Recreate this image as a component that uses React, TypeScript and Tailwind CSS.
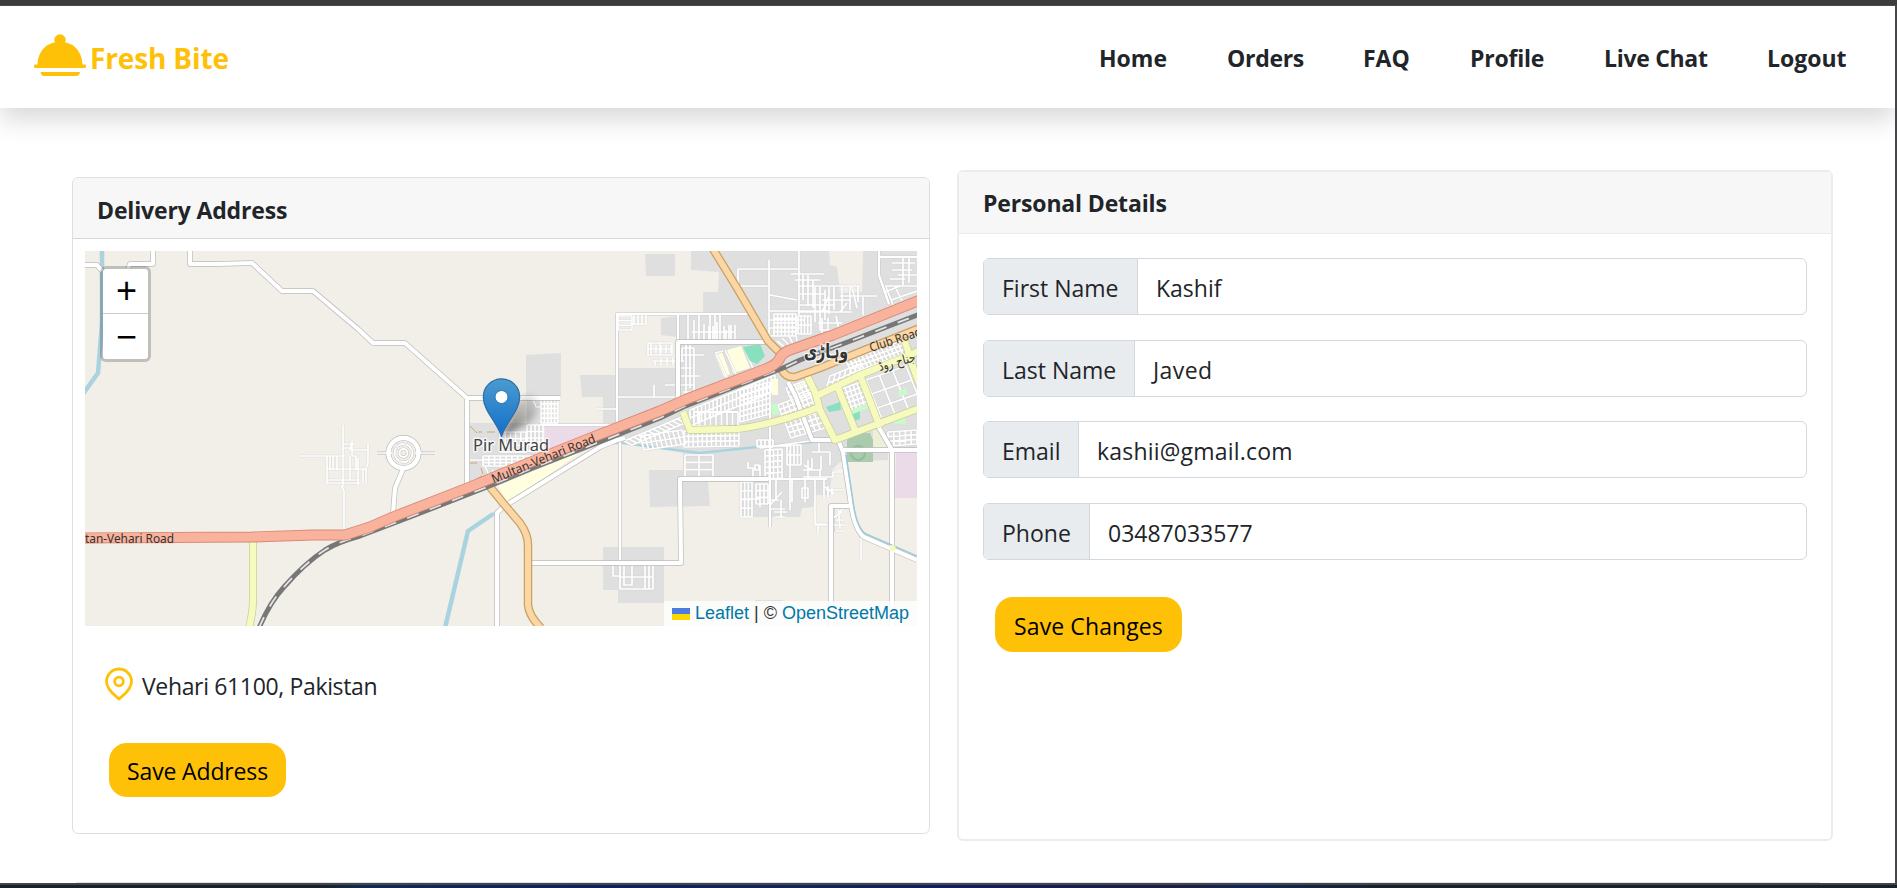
import React from "react";

type Pt = [number, number];

/** Street grid: a parallelogram from `o` spanned by `u` and `v`, cut into nu x nv blocks. */
function grid(o: Pt, u: Pt, v: Pt, nu: number, nv: number): string {
  let d = "";
  for (let i = 0; i <= nu; i++) {
    const x = o[0] + (u[0] * i) / nu;
    const y = o[1] + (u[1] * i) / nu;
    d += `M${x} ${y}l${v[0]} ${v[1]}`;
  }
  for (let j = 0; j <= nv; j++) {
    const x = o[0] + (v[0] * j) / nv;
    const y = o[1] + (v[1] * j) / nv;
    d += `M${x} ${y}l${u[0]} ${u[1]}`;
  }
  return d;
}

const fineStreets = [
  // village west of the roundabout
  "M300 456H345M343 425V487M327 456V483M330 456V470M333 456V470M337 456V470M326 469H366M327 483H360M328 480H358M358 458V485M363 469V482M366 469V482M366 469L368 462V443M352 450H368M352 442L350 450M343 444H354M343 448H352M352 441V456H356V470M350 456V480M344 530V490L341 486",
  // Pir Murad
  grid([541, 399], [17, 0], [0, 24], 5, 5),
  grid([527, 425], [16, 0], [0, 26], 4, 4),
  grid([500, 432], [26, 0], [0, 20], 5, 3),
  grid([483, 456], [52, 0], [0, 10], 9, 3),
  "M533 399L536 407H541M470 460H490M493 470V480M485 466L492 482M541 425H617",
  // village in the south
  grid([620, 565], [33, 0], [0, 24], 1, 2),
  "M613 564V576H620M624 566V585H632V566M645 564V589M649 564V589",
  // north-west blocks
  "M596 409H617M617 397H678M654 385V397",
  grid([618, 316], [14, 0], [0, 14], 1, 3),
  "M634 315V324M638 315V325M642 315V324M646 315V324M630 324H646",
  grid([648, 343], [24, 0], [0, 12], 2, 2),
  "M651 343V354M656 346V353M661 346V353M666 345V353M671 345V353M653 361H684M655 361V366M661 358V365M667 358V365M673 358V365M682 348V362",
  "M688 315V342M694 320V342M699 315V342M704 324V342M710 315V342M715 315V342M720 315V342M724 326V340M729 325V340M735 325V340M692 332H735M682 348H694M686 342V396M690 342V388M694 348V392M680 355H704M680 368H692M665 385H694M681 376H700M683 392H700",
  "M709 326V342M713 326V342M731 325V342M717 322V342M726 330V342",
  "M716 353L727 378M725 350L736 374M745 349L754 371M715 353L723 351",
  // blocks around the junction, north side
  "M738 269H799M738 269V287M738 286H769M769 260V344M799 251V315M791 274H824M795 280H820M798 286H860M770 295L797 300M770 311H830M770 320H805M770 328H800M770 336H790",
  "M803 275V300M808 275V306M813 280V308M798 294H825M800 305H835M798 312H852M815 287V322M820 287V330M825 290V320M829 287V314M822 300H850M834 287V310M842 287V312M850 287V310M858 286V302M829 296L822 312M863 297V315M840 296H877M852 287L857 308M847 303L840 312",
  grid([774, 314], [22, 0], [0, 22], 6, 5),
  grid([798, 316], [13, 0], [0, 18], 4, 2),
  "M818 323H842M822 318V335M828 318V334M836 316L839 330M820 330H840M777 341L787 349M782 338L790 346M788 334L793 344M795 330L797 341",
  "M892 263H915M892 270H912M898 275H917M903 257V285M890 279H905M909 258V283M885 286H917M886 287L893 305M895 286L902 301M885 292L900 286M891 300L917 291",
  // blocks south of the railway
  grid([690, 410], [85, -35], [0, 16], 22, 2),
  grid([624, 441], [58, -24], [8, 4], 12, 1),
  grid([640, 436], [42, -6], [4, 14], 9, 2),
  grid([684, 431], [55, -1], [0, 16], 12, 3),
  grid([740, 390], [30, -8], [0, 32], 8, 6),
  grid([694, 412], [44, 0], [0, 14], 8, 1),
  grid([778, 405], [36, -14], [5, 14], 8, 3),
  grid([786, 388], [26, -10], [6, 14], 6, 3),
  grid([785, 422], [34, -10], [6, 16], 7, 3),
  grid([826, 390], [32, -13], [4, -14], 6, 2),
  grid([846, 361], [55, -20], [6, 12], 14, 3),
  grid([841, 389], [20, -7], [8, 24], 5, 5),
  grid([866, 380], [40, -14], [17, 42], 3, 3),
  grid([888, 432], [29, -2], [0, 14], 5, 3),
  grid([757, 440], [16, 0], [0, 7], 4, 1),
  "M760 448L817 440M757 446H790",
  // blocks along the southern edge
  grid([685, 455], [28, 0], [0, 22], 2, 3),
  grid([765, 450], [17, -1], [0, 29], 4, 5),
  grid([787, 445], [14, 0], [0, 20], 4, 2),
  "M748 462V468H753V478M755 465H759V470H755ZM760 465V480M790 450V510M792 479V502M776 480V500M804 465L812 470M803 470H820V477M808 460V478M812 458V470M818 452H830V465M819 443V452H812M803 477H833V472H843M821 456V470",
  grid([741, 482], [11, 0], [0, 35], 3, 4),
  grid([756, 484], [12, 0], [0, 20], 3, 3),
  "M741 499H760M760 499V507M770 505L782 492M771 500H779M770 509H785M781 500V517M774 512H787M775 517H785M802 488V498H808V488ZM805 479V502M815 479V524H826M815 525H830M818 526V533M824 479V498M825 487L835 494M826 490H844M828 486V497M832 488V495M842 512L833 518M835 520H843M833 525H846M836 531H845M838 505L840 528M846 505L838 514",
  "M861 535V560M837 470H843",
].join("");

const mediumStreets =
  "M617 423V314H750M617 423L620 440V560M678 314V342M541 425H617M770 405V527M768 479H827M879 251V275L889 304M879 257H917M694 412H738M833 506V532";

const whiteRoads = [
  "M85 265H97L102 271",
  "M128 269L130 264H153V251",
  "M190 251V264H218L252 263L282 291H313L358 329L373 343H405L467 398V484",
  "M467 398H560",
  "M497 626V513L503 507L600 447L617 440L625 438",
  "M531 563H681L680 479H768",
  "M403 469L395 488L393 514",
  "M678 398V342H768",
  "M831 626V506H849",
  "M788 382L795 395L812 440H838L843 452L850 498Q854 530 864 537L917 560",
  "M892 626V450L878 426",
  "M843 450H917",
];

const trunk =
  "M80 538L253 537L313 535H345L370 527L393 517L470 487L543 457L593 437L660 411L687 399L768 368Q778 364 781 356Q784 352 790 350L833 335L920 300";
const rail =
  "M259 628Q270 602 284 587Q305 563 325 550Q338 542 360 536L410 517L487 487L533 468L607 439L660 418L683 407L783 368L800 360L853 340L920 314";
const orange = [
  "M713 249L737 288L768 341L782 355",
  "M782 370Q786 378 795 377L820 368L867 349L920 328",
  "M490 487L503 503L520 523Q528 534 528 545V605Q529 616 541 628",
];
const yellow = [
  "M253 540V600Q253 612 249 628",
  "M683 412L690 430L737 429Q775 424 817 408",
  "M807 376L815 392L820 410L835 440L880 423L920 408",
  "M818 395L860 375L910 355L920 350",
  "M838 388L855 430",
  "M860 375L880 427",
  "M904 338L913 367L920 386",
];

function MapDrawing() {
  return (
    <svg viewBox="85 251 832 375" className="block h-full w-full" fill="none" strokeLinejoin="round">
      <defs>
        <linearGradient id="pin" x1="0" y1="0" x2="0" y2="1">
          <stop offset="0" stopColor="#4b9bd0" />
          <stop offset="1" stopColor="#126fc8" />
        </linearGradient>
        <linearGradient id="shade" x1="0" y1="1" x2="1" y2="0">
          <stop offset="0" stopColor="#000" stopOpacity=".55" />
          <stop offset="1" stopColor="#000" stopOpacity=".05" />
        </linearGradient>
        <filter id="soft" x="-30%" y="-30%" width="160%" height="160%">
          <feGaussianBlur stdDeviation="3" />
        </filter>
      </defs>
      <rect x="85" y="251" width="832" height="375" fill="#f2efe9" />

      {/* built-up areas */}
      <g fill="#dfdfdf">
        <path d="M526 355L561 353V397H526ZM580 375H617V368H678V337L661 335V318L703 313V292H718L719 272L691 270V251H917V452H888V460L840 462L832 470L830 495H815L813 507L802 508L800 517H740V482H708L710 506L650 507L649 470H683V453L620 440V423H603V397H582Z" />
        <path d="M645 254H675V276H646ZM603 547H664V603H618V590H603ZM470 423H543V455L470 484ZM527 397H543V425H527ZM755 600H783V604H755Z" />
      </g>
      <path d="M829 251H863L862 292L840 293L837 267L830 265Z" fill="#f2efe9" />
      <g fill="#ffffe0">
        <path d="M715 355L722 352L730 374L724 377ZM727 350L741 346L750 368L733 373ZM793 384L808 381L800 391ZM498 486L582 451L553 472L507 502Z" />
      </g>
      <path d="M873 430L884 428L890 448H873Z" fill="#eef0d5" />
      <path d="M847 440L858 433H870L873 440V462H847Z" fill="#aacbae" />
      <circle cx="858" cy="453" r="7" stroke="#8fbf98" strokeWidth="2" />
      <path d="M896 453H917V498H895ZM545 427H615L545 453Z" fill="#ebdbe8" />
      <path d="M470 426L477 433M478 432H482M487 432H495M470 463H477M481 468L483 474M475 480L482 476" stroke="#cda869" strokeWidth="1" />

      {/* water */}
      <g stroke="#aad3df">
        <path d="M102 249V323L98 373L83 394M445 628L468 531L493 514" strokeWidth="4.500" />
        <path d="M493 514L547 480L607 443L623 443L660 448L700 453L757 447L812 442" strokeWidth="2.500" />
      </g>

      {/* streets */}
      <path d={fineStreets} stroke="#cdcdcd" strokeWidth="2.600" opacity=".7" />
      <path d={mediumStreets} stroke="#c4c4c4" strokeWidth="3.600" />
      <path d={fineStreets} stroke="#fff" strokeWidth="1.700" />
      <path d={mediumStreets} stroke="#fff" strokeWidth="2.400" />

      {/* parks and sports grounds */}
      <path d="M743 347L760 344L765 356L757 364L750 361ZM826 407L840 402L841 410L829 412ZM852 413L860 411V419L854 421Z" fill="#88e0be" />
      <path d="M771 405L777 403L779 414L772 416ZM851 410L868 403V408L853 414ZM898 391L907 388V394L899 397ZM893 422L905 417L906 424H895Z" fill="#c8facc" />
      <path d="M772 379H778V395H772Z" fill="#ffffe0" />

      <g stroke="#bdbdbd" strokeWidth="5.600">
        {whiteRoads.map((d) => (
          <path key={d} d={d} />
        ))}
        <path d="M377 453H435" strokeWidth="3" />
        <circle cx="403.500" cy="453" r="15" strokeWidth="6" />
      </g>
      <g stroke="#fff" strokeWidth="4.200">
        {whiteRoads.map((d) => (
          <path key={d} d={d} />
        ))}
        <path d="M377 453H435" strokeWidth="1.600" />
        <circle cx="403.500" cy="453" r="15" strokeWidth="4.500" />
      </g>
      <circle cx="403.500" cy="453" r="12" fill="#f2efe9" />
      <g stroke="#c4c4c4" strokeWidth="3.200">
        <circle cx="403.500" cy="453" r="9" strokeDasharray="7 2" />
        <circle cx="403.500" cy="453" r="4" />
      </g>
      <g stroke="#fff" strokeWidth="2">
        <circle cx="403.500" cy="453" r="9" strokeDasharray="7 2" />
        <circle cx="403.500" cy="453" r="4" />
      </g>
      <path d="M846 455L852.500 498Q856 528 866 534L917 556" stroke="#9cc9d8" strokeWidth="1.600" />

      {/* main roads */}
      <g stroke="#c9cd92" strokeWidth="7.800">
        {yellow.map((d) => (
          <path key={d} d={d} />
        ))}
      </g>
      <g stroke="#f7fabf" strokeWidth="6.400">
        {yellow.map((d) => (
          <path key={d} d={d} />
        ))}
      </g>
      <circle cx="892.500" cy="548" r="3" fill="#f7fabf" />
      <g stroke="#c9a262" strokeWidth="8.500">
        {orange.map((d) => (
          <path key={d} d={d} />
        ))}
      </g>
      <g stroke="#fcd6a4" strokeWidth="6">
        {orange.map((d) => (
          <path key={d} d={d} />
        ))}
      </g>
      <path d={rail} stroke="#777" strokeWidth="5" />
      <path d={rail} stroke="#e4e4e4" strokeWidth="1.800" strokeDasharray="12 12" />
      <path d={trunk} stroke="#d88a76" strokeWidth="11" />
      <path d={trunk} stroke="#f9b29c" strokeWidth="9.200" />

      {/* labels */}
      <g
        fill="#333"
        fontFamily="'Noto Sans', sans-serif"
        fontSize="12.500"
        stroke="#f9b29c"
        strokeOpacity=".5"
        strokeWidth="1.500"
        style={{ paintOrder: "stroke" }}
      >
        <text x="85" y="542.500" textLength="89" lengthAdjust="spacingAndGlyphs">tan-Vehari Road</text>
        <text transform="translate(493.500 483.500) rotate(-22)" textLength="111" lengthAdjust="spacingAndGlyphs">
          Multan-Vehari Road
        </text>
        <text transform="translate(871 352) rotate(-18)" stroke="#fcd6a4" textLength="54" lengthAdjust="spacingAndGlyphs">
          Club Road
        </text>
        <text
          x="511"
          y="451"
          fontSize="16.500"
          fill="#444"
          stroke="#fff"
          strokeOpacity=".7"
          strokeWidth="3"
          textAnchor="middle"
          textLength="76"
          lengthAdjust="spacingAndGlyphs"
        >
          Pir Murad
        </text>
        <text
          x="826"
          y="358"
          fontSize="20"
          fontFamily="'DejaVu Sans', sans-serif"
          fontWeight="bold"
          stroke="#fff"
          strokeOpacity=".7"
          strokeWidth="3"
          textAnchor="middle"
          direction="rtl"
          textLength="44"
          lengthAdjust="spacingAndGlyphs"
        >
          وہاڑی
        </text>
        <text
          transform="translate(898 366) rotate(-15)"
          fontSize="13"
          fontFamily="'DejaVu Sans', sans-serif"
          stroke="#f7fabf"
          strokeWidth="2"
          textAnchor="middle"
          direction="rtl"
          textLength="38"
          lengthAdjust="spacingAndGlyphs"
        >
          جناح روڈ
        </text>
      </g>

      {/* marker */}
      <path d="M501.500 438L517 403Q530 390 536 399Q542 412 530 422Z" fill="url(#shade)" filter="url(#soft)" />
      <path
        d="M501.500 436.500C497 422 483.300 411 483.300 397A18.200 18.200 0 0 1 519.700 397C519.700 411 506 422 501.500 436.500Z"
        fill="url(#pin)"
        stroke="#2e6fa3"
        strokeWidth="1.200"
      />
      <circle cx="501.500" cy="397" r="6.500" fill="#fff" stroke="#2f74ab" strokeWidth="1" />
    </svg>
  );
}

function DeliveryMap() {
  return (
    <div className="relative h-[375px] w-[832px] overflow-hidden">
      <MapDrawing />
      <div className="absolute top-[15px] left-[15px] flex h-[96px] w-[51px] flex-col rounded-[6px] border-[3px] border-black/20 bg-white bg-clip-padding font-['Liberation_Mono',monospace] text-[36px] leading-[50px] text-black">
        <button className="h-[45px] border-b border-[#ccc] pl-[2px] text-center">+</button>
        <button className="h-[45px] pl-[2px] text-center leading-[52px]">−</button>
      </div>
      <div className="absolute right-0 bottom-0 flex h-[25px] items-center bg-white/80 pr-[8px] pl-[8px] font-['Liberation_Sans',sans-serif] text-[18px] leading-[25px] whitespace-pre text-[#333]">
        <svg viewBox="0 0 18 12" className="mr-[5px] h-[12px] w-[18px]">
          <path fill="#4C7BE1" d="M0 0h18v6H0z" />
          <path fill="#FFD500" d="M0 6h18v6H0z" />
        </svg>
        <span className="text-[#0078A8]">Leaflet</span> | © <span className="text-[#0078A8]">OpenStreetMap</span>
      </div>
    </div>
  );
}

const navItems = [
  { label: "Home", width: "w-[128px]" },
  { label: "Orders", width: "w-[136px] tracking-[-0.3px]" },
  { label: "FAQ", width: "w-[107px]" },
  { label: "Profile", width: "w-[134px] tracking-[-0.2px]" },
  { label: "Live Chat", width: "w-[163px] tracking-[-0.3px]" },
  { label: "Logout", width: "w-[82px]" },
];

const fields = [
  { label: "First Name", value: "Kashif", width: "w-[154px]", tracking: "" },
  { label: "Last Name", value: "Javed", width: "w-[151px]", tracking: "tracking-[0.4px]" },
  { label: "Email", value: "kashii@gmail.com", width: "w-[95px]", tracking: "tracking-[0.2px]" },
  { label: "Phone", value: "03487033577", width: "w-[106px]", tracking: "" },
];

export default function App() {
  return (
    <div className="flex h-[888px] w-[1897px] flex-col overflow-hidden bg-white font-['Open_Sans',sans-serif] text-[23px] text-[#212529]">
      <div className="h-[6px] shrink-0 border-b border-[#4a4a4a] bg-[#3c3c3c]" />
      <div className="flex h-[877px] shrink-0 flex-col border-r-2 border-[#464648]">
        <div className="flex h-[876px] flex-col overflow-hidden">
          <header className="relative flex h-[102px] shrink-0 items-center justify-between bg-white pl-[34px] shadow-[0_12px_24px_rgba(0,0,0,0.15)]">
            <div className="flex items-center text-[#ffc107]">
              <svg viewBox="0 0 52 42" className="mt-[-4px] h-[42px] w-[52px]" fill="currentColor">
                <circle cx="26" cy="6" r="5.700" />
                <path d="M3.500 30.500C4 17 13 7.800 26 7.800S48 17 48.500 30.500H50.500A1.750 1.750 0 0 1 50.500 34H1.500A1.750 1.750 0 0 1 1.500 30.500Z" />
                <path d="M6.500 38H46Q45.500 42 42 42H10.500Q7 42 6.500 38Z" />
              </svg>
              <span className="mt-[2px] ml-[4px] text-[28px] leading-[40px] font-bold tracking-[-0.15px]">Fresh Bite</span>
            </div>
            <nav className="mt-[2px] flex w-[796px] text-[23px] font-bold">
              {navItems.map((n) => (
                <a key={n.label} className={`${n.width} whitespace-nowrap`}>
                  {n.label}
                </a>
              ))}
            </nav>
          </header>

          <main className="flex grow items-start pl-[72px]">
            <section className="mt-[69px] h-[657px] w-[858px] rounded-[6px] border border-[#dfdfdf]">
              <h2 className="h-[61px] rounded-t-[5px] border-b border-[#d8d8d8] bg-[#f7f7f7] pl-[24px] text-[23px] leading-[64px] font-bold tracking-[-0.15px]">
                Delivery Address
              </h2>
              <div className="pt-[12px] pl-[12px]">
                <DeliveryMap />
                <div className="mt-[41px] flex h-[34px] pl-[20px]">
                  <svg viewBox="0 0 28 34" className="h-[34px] w-[28px]" fill="none" stroke="#ffc107" strokeWidth="2.800">
                    <path d="M14 32C11 29 1.500 23.500 1.500 14.500a12.500 12.500 0 0 1 25 0C26.500 23.500 17 29 14 32Z" strokeLinejoin="round" />
                    <circle cx="14" cy="14.500" r="4.300" />
                  </svg>
                  <span className="mt-[2px] ml-[9px] leading-[34px] tracking-[-0.35px]">Vehari 61100, Pakistan</span>
                </div>
                <button className="mt-[42px] ml-[24px] block h-[54px] w-[177px] rounded-[18px] bg-[#ffc107] leading-[56px] tracking-[-0.15px] text-black">
                  Save Address
                </button>
              </div>
            </section>

            <section className="mt-[62px] ml-[27px] h-[671px] w-[876px] rounded-[6px] border-2 border-[#ececec]">
              <h2 className="h-[62px] border-b border-[#ebebeb] bg-[#f7f7f7] pl-[24px] text-[23px] leading-[62px] font-bold tracking-[-0.15px]">
                Personal Details
              </h2>
              <div className="flex flex-col gap-[24.600px] pt-[24px] pr-[24px] pl-[24px]">
                {fields.map((f) => (
                  <label key={f.label} className="flex h-[57px] overflow-hidden rounded-[6px] border border-[#d3d8de]">
                    <span className={`${f.width} shrink-0 border-r border-[#d3d8de] bg-[#e9ecef] pl-[18px] leading-[58px]`}>
                      {f.label}
                    </span>
                    <span className={`pl-[18px] leading-[58px] ${f.tracking}`}>{f.value}</span>
                  </label>
                ))}
                <button className="mt-[13px] ml-[12px] h-[55px] w-[187px] rounded-[18px] bg-[#ffc107] leading-[59px] tracking-[0.1px] text-black">
                  Save Changes
                </button>
              </div>
            </section>
          </main>
        </div>
        <div className="mr-[75px] ml-[76px] h-px shrink-0 bg-[#e2e2e2]" />
      </div>
      <div className="h-[2px] shrink-0 bg-[#434648]" />
      <div className="h-[3px] shrink-0 bg-[linear-gradient(90deg,#18222b_0%,#18222b_17%,#102a55_19%,#0e1f66_33%,#12265c_42%,#101c66_50%,#1b1f45_62%,#10265a_66%,#18222b_73%,#18222b_100%)]" />
    </div>
  );
}
